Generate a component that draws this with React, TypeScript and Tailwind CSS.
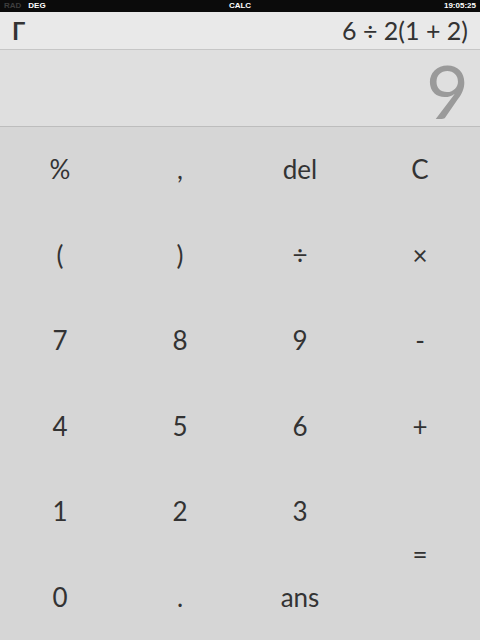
const keys: { label: string; span?: boolean }[] = [
  { label: '%' },
  { label: ',' },
  { label: 'del' },
  { label: 'C' },
  { label: '(' },
  { label: ')' },
  { label: '÷' },
  { label: '×' },
  { label: '7' },
  { label: '8' },
  { label: '9' },
  { label: '-' },
  { label: '4' },
  { label: '5' },
  { label: '6' },
  { label: '+' },
  { label: '1' },
  { label: '2' },
  { label: '3' },
  { label: '=', span: true },
  { label: '0' },
  { label: '.' },
  { label: 'ans' },
];

export default function App() {
  return (
    <div className="flex h-[640px] w-[480px] flex-col overflow-hidden bg-[#d6d6d6] font-['Lato','Open_Sans',sans-serif] text-[#333]">
      {/* status bar */}
      <div className="relative flex h-[12px] items-center bg-[#0b0b0b] px-[4px] font-['Liberation_Sans',sans-serif] text-[8px] font-bold leading-none">
        <span className="text-[#3e3e3e]">RAD</span>
        <span className="ml-[7px] text-white">DEG</span>
        <span className="absolute left-1/2 -translate-x-1/2 text-white">CALC</span>
        <span className="ml-auto text-white">19:05:25</span>
      </div>

      {/* expression */}
      <div className="flex h-[38px] items-center border-b border-[#c6c6c6] bg-[#e9e9e9] pl-[12px] pr-[12px]">
        <span className="text-[24px] font-bold leading-none text-[#333]">Γ</span>
        <span className="ml-auto text-[25px] leading-none text-[#333]">6 ÷ 2(1 + 2)</span>
      </div>

      {/* result */}
      <div className="flex h-[77px] items-end justify-end border-b border-[#bdbdbd] bg-[#dfdfdf] pr-[11px]">
        <span className="mb-[-2px] text-[74px] leading-none text-[#9a9a9a]">9</span>
      </div>

      {/* keypad */}
      <div className="grid flex-1 grid-cols-4 grid-rows-6">
        {keys.map((k) => (
          <button
            key={k.label}
            className={
              k.span
                ? 'row-span-2 flex items-center justify-center text-[26px] text-[#333]'
                : 'flex items-center justify-center text-[26px] text-[#333]'
            }
          >
            {k.label}
          </button>
        ))}
      </div>
    </div>
  );
}
